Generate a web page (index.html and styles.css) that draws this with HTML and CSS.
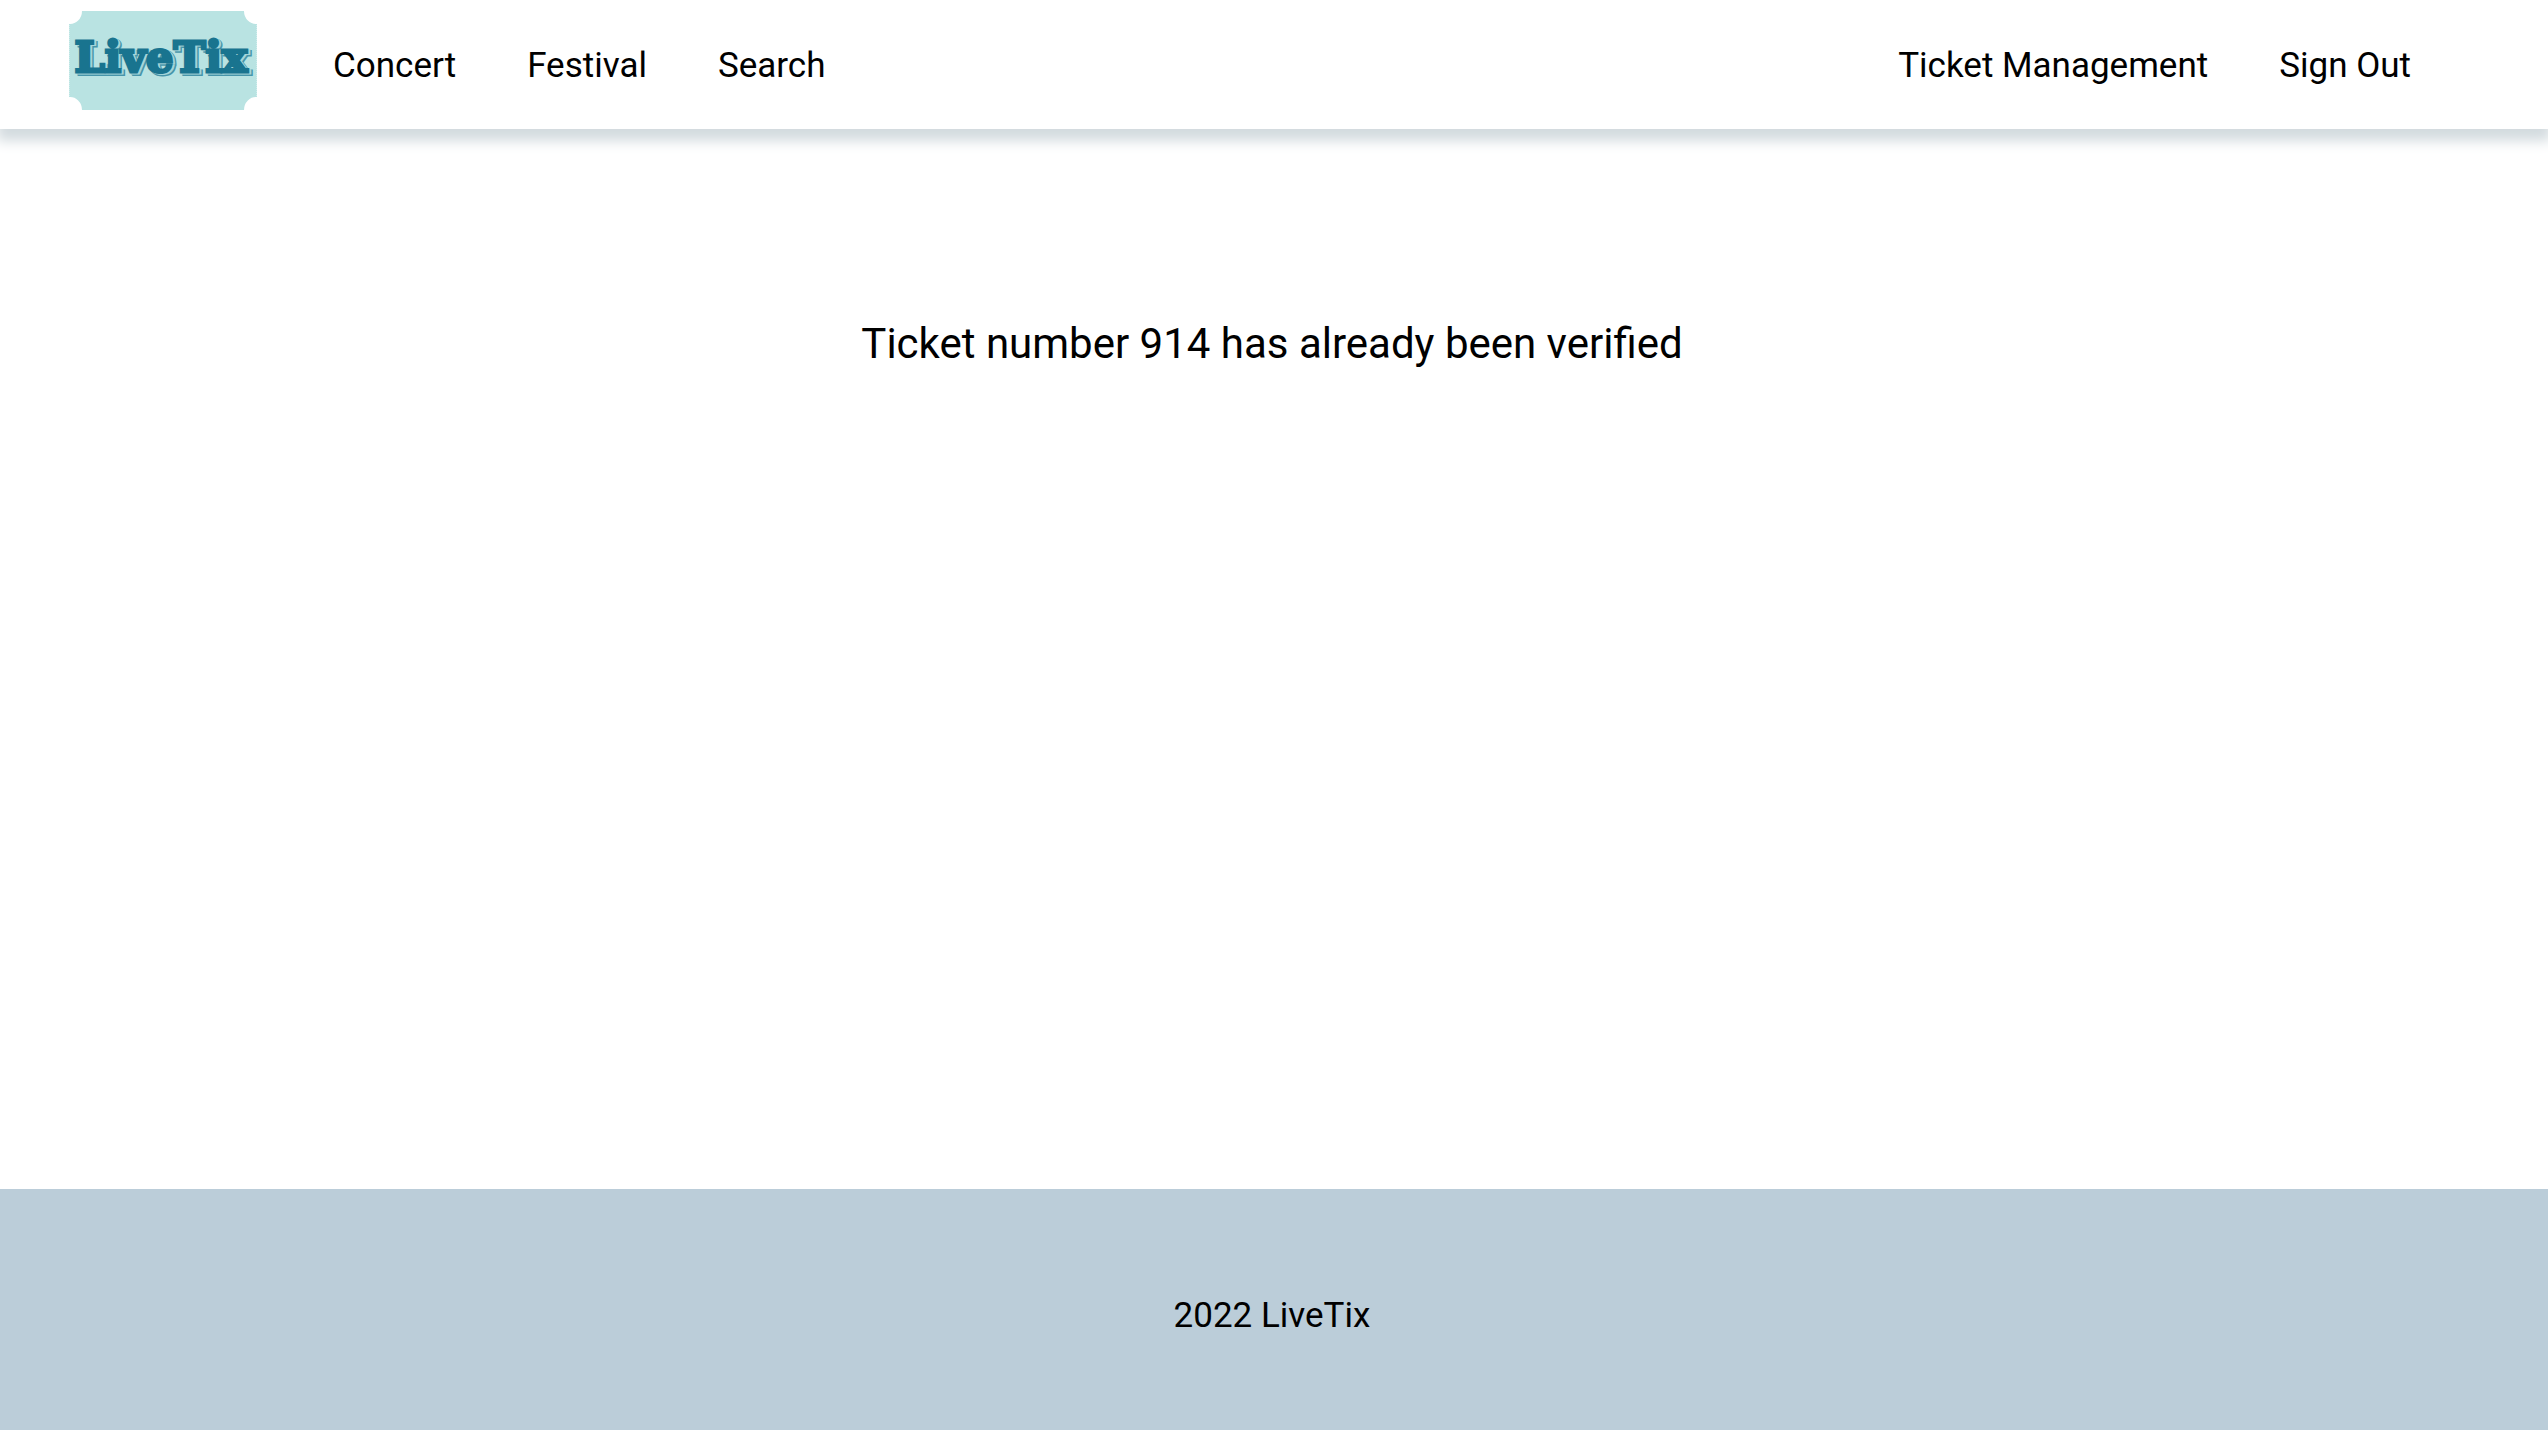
FILE: index.html
```html
<!DOCTYPE html>
<html lang="en">
<head>
<meta charset="utf-8">
<meta name="viewport" content="width=device-width, initial-scale=1">
<title>LiveTix</title>
<link rel="stylesheet" href="styles.css">
</head>
<body>
<header class="header">
  <a class="logo" href="#" aria-label="LiveTix">
    <svg class="logo-ticket" viewBox="0 0 188 99">
      <path fill="#b9e3e2" d="M13 0H175A12 13 0 0 0 188 13V86A12 13 0 0 0 175 99H13A12 13 0 0 0 0 86V13A12 13 0 0 0 13 0Z"/>
      <path fill="none" stroke="#fff" stroke-width="1" stroke-dasharray="1 1" opacity=".7" d="M0 14V86M188 14V86"/>
      <text class="word word-shadow" x="95" y="63">LiveTix</text>
      <text class="word word-gap" x="94" y="62">LiveTix</text>
      <text class="word word-face" x="92" y="61">LiveTix</text>
    </svg>
  </a>
  <nav class="nav">
    <a class="link" href="#">Concert</a>
    <a class="link" href="#">Festival</a>
    <a class="link" href="#">Search</a>
  </nav>
  <nav class="nav nav-account">
    <a class="link" href="#">Ticket Management</a>
    <a class="link" href="#">Sign Out</a>
  </nav>
</header>
<main class="main">
  <p class="message">Ticket number 914 has already been verified</p>
</main>
<footer class="footer">2022 LiveTix</footer>
</body>
</html>
```
FILE: styles.css
```css
* { box-sizing: border-box; }
body {
  margin: 0;
  min-height: 100vh;
  display: flex;
  flex-direction: column;
  background: #fff;
  color: #000;
  font-family: Roboto, "Liberation Sans", sans-serif;
  font-size: 35px;
  line-height: 42px;
}
.header {
  display: flex;
  align-items: center;
  padding: 11px 137px 19px 69px;
  box-shadow: 0 9px 12px 3px #d3dbdf;
}
.logo { display: flex; }
.logo-ticket { width: 188px; height: 99px; }
.word {
  font-family: "DejaVu Serif", serif;
  font-weight: 700;
  font-size: 43px;
  text-anchor: middle;
  stroke-linejoin: miter;
}
.word-shadow { fill: #4795aa; stroke: #4795aa; stroke-width: 4px; }
.word-gap { fill: #a3d5d9; stroke: #a3d5d9; stroke-width: 3px; }
.word-face { fill: #19748f; stroke: #19748f; stroke-width: 3px; }
.nav {
  display: flex;
  gap: 71px;
  margin-left: 76px;
  padding-top: 10px;
}
.nav-account { margin-left: auto; }
.link { color: inherit; text-decoration: none; }
.main {
  flex: 1;
  padding: 190px 32px 0 28px;
  text-align: center;
}
.message {
  margin: 0;
  font-size: 42px;
  line-height: 50px;
}
.footer {
  padding: 106px 32px 93px 28px;
  background: #bbcdd9;
  text-align: center;
}
```
